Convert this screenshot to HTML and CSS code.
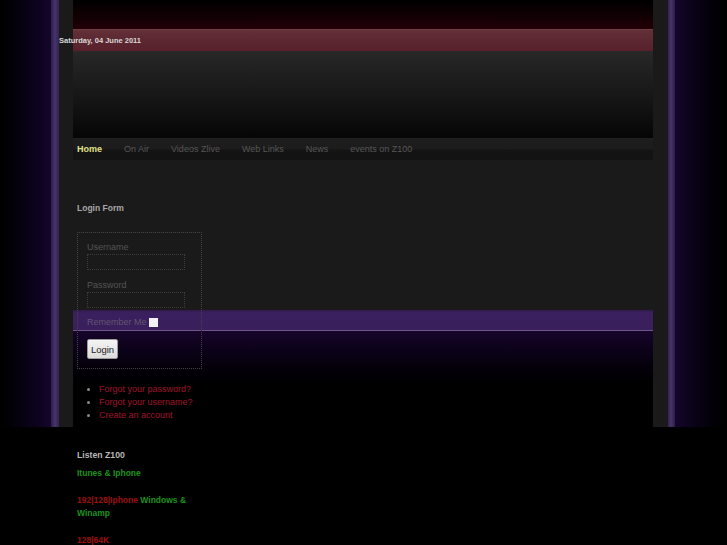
FILE: index.html
```html
<!DOCTYPE html>
<html lang="en">
<head>
<meta charset="utf-8">
<title>Z100</title>
<link rel="stylesheet" href="styles.css">
</head>
<body>
<div class="page">
  <header class="header">
    <div class="top"></div>
    <div class="dateband"><span class="date">Saturday, 04 June 2011</span></div>
    <div class="banner"></div>
  </header>
  <nav class="nav">
    <a class="nav-item active" href="#">Home</a>
    <a class="nav-item" href="#">On Air</a>
    <a class="nav-item" href="#">Videos Zlive</a>
    <a class="nav-item" href="#">Web Links</a>
    <a class="nav-item" href="#">News</a>
    <a class="nav-item" href="#">events on Z100</a>
  </nav>
  <main class="main">
    <aside class="sidebar">
      <section class="module">
        <h3 class="module-title">Login Form</h3>
        <form class="login-box">
          <div class="field">
            <label class="label" for="u">Username</label>
            <input class="text-input" id="u" type="text">
          </div>
          <div class="field">
            <label class="label" for="p">Password</label>
            <input class="text-input" id="p" type="password">
          </div>
          <div class="remember">
            <label class="label inline" for="r">Remember Me</label>
            <input class="check" id="r" type="checkbox">
          </div>
          <button class="btn" type="button">Login</button>
        </form>
        <ul class="links">
          <li><a href="#">Forgot your password?</a></li>
          <li><a href="#">Forgot your username?</a></li>
          <li><a href="#">Create an account</a></li>
        </ul>
      </section>
      <section class="module listen">
        <h3 class="module-title big">Listen Z100</h3>
        <p class="green">Itunes &amp; Iphone</p>
        <p><span class="red">192|128|Iphone</span> <span class="green">Windows &amp; Winamp</span></p>
        <p class="red">128|64K</p>
      </section>
    </aside>
  </main>
</div>
</body>
</html>
```

FILE: styles.css
```css
html, body {
  margin: 0;
  padding: 0;
}
body {
  font-family: "Liberation Sans", Arial, sans-serif;
  font-size: 9px;
  background-color: #000;
  background-image: linear-gradient(to right,
    #000 0px, #03010a 15px, #0d0320 38px, #14062a 51px,
    #2e1c4c 51px, #46346c 55px, #34224f 59px,
    #1a1a1a 59px, #1a1a1a 668px,
    #34224f 668px, #46346c 671px, #2e1c4c 675px,
    #14062a 675px, #0a0218 695px, #020006 715px, #000 727px);
  background-size: 100% 427px;
  background-repeat: no-repeat;
  min-height: 545px;
}
.page {
  width: 580px;
  margin: 0 auto;
  position: relative;
  left: -0.5px;
  background: linear-gradient(to bottom,
    transparent 0, transparent 310px,
    #311a4c 310px, #3b2060 313px, #3a1f5c 330px,
    #6c5888 330px, #6c5888 331px,
    #16042a 331px, #0c0219 350px, #030008 370px, #000 385px);
  min-height: 545px;
}
.top {
  height: 29px;
  background: linear-gradient(to bottom, #000 0, #0a0002 10px, #210006 29px);
}
.dateband {
  height: 22px;
  background: linear-gradient(to bottom, #7a4a50 0, #643038 1px, #5e2a33 8px, #58202b 22px);
  display: flex;
  align-items: center;
}
.date {
  margin-left: -14px;
  font-weight: bold;
  font-size: 7.5px;
  color: #d8d8d8;
  line-height: 11px;
}
.banner {
  height: 87px;
  background: linear-gradient(to bottom, #282828 0, #202020 20px, #151515 50px, #050505 87px);
}
.nav {
  box-sizing: border-box;
  height: 22px;
  background: linear-gradient(to bottom, #242424 0, #1d1d1d 1px, #1c1c1c 11px, #141414 12px, #131313 22px);
  display: flex;
  align-items: center;
  gap: 22px;
  padding: 1px 0 0 4px;
}
.nav-item {
  font-size: 9px;
  line-height: 21px;
  color: #565656;
  text-decoration: none;
}
.nav-item.active {
  color: #e2e28a;
  font-weight: bold;
}
.main {
  padding: 42px 0 0 4px;
}
.sidebar {
  width: 125px;
}
.module-title {
  margin: 0 0 17px;
  font-size: 8.5px;
  line-height: 13px;
  font-weight: bold;
  color: #a8a8a8;
}
.login-box {
  box-sizing: border-box;
  width: 125px;
  border: 1px dotted #454545;
  padding: 7px 9px 9px;
  margin: 0;
}
.field {
  margin-bottom: 8px;
}
.label {
  display: block;
  font-size: 9px;
  line-height: 13px;
  color: rgba(125, 125, 125, 0.6);
}
.field .label {
  padding-top: 1px;
}
.label.inline {
  display: inline;
}
.text-input {
  display: block;
  box-sizing: border-box;
  width: 98px;
  height: 16px;
  margin: 0;
  padding: 0;
  border: 1px dotted #3c3c3c;
  background: transparent;
}
.remember {
  display: flex;
  align-items: center;
  height: 13px;
}
.check {
  appearance: none;
  -webkit-appearance: none;
  width: 9px;
  height: 9px;
  margin: 0 0 0 2px;
  background: #f2f2f2;
  border: none;
}
.btn {
  display: block;
  margin-top: 10px;
  width: 31px;
  height: 20px;
  padding: 0;
  font-family: "Liberation Sans", Arial, sans-serif;
  font-size: 9.5px;
  color: #1c1c1c;
  background: linear-gradient(to bottom, #f4f4f4, #dcdcdc);
  border: 1px solid #9a9a9a;
  border-radius: 2px;
}
.links {
  margin: 14px 0 0;
  padding: 0 0 0 22px;
  list-style: disc;
}
.links li {
  line-height: 13px;
  font-size: 9px;
}
.links li::marker {
  color: #8a8a8a;
}
.links a {
  color: #a0142c;
  text-decoration: none;
}
.listen {
  margin-top: 27px;
}
.listen .module-title {
  margin-bottom: 5px;
  font-size: 8.7px;
  color: #b8b8b8;
}
.listen p {
  margin: 0 0 14px;
  font-size: 8.5px;
  line-height: 13px;
  font-weight: bold;
}
.green {
  color: #1c941c;
}
.red {
  color: #9c1010;
}
```
